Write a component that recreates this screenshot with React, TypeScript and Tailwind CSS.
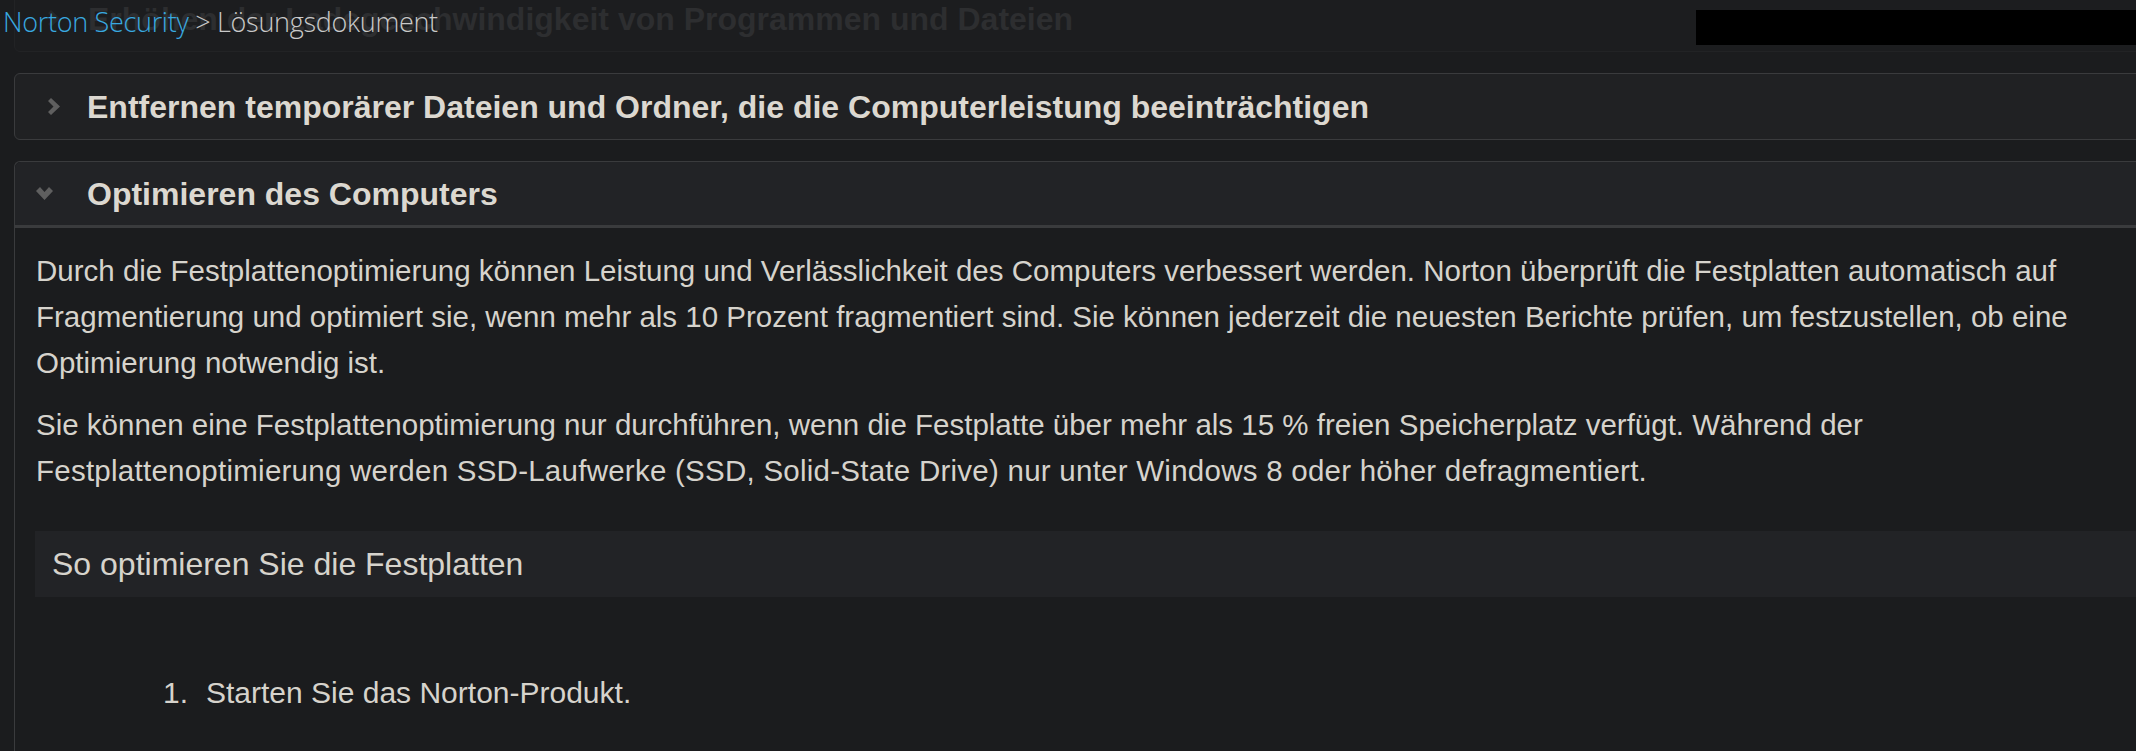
function ChevronRight({ className }: { className?: string }) {
  return (
    <svg viewBox="0 0 12 17" className={className}>
      <polygon points="0,3 3,0 12,8.5 3,17 0,14 5.5,8.5" fill="currentColor" />
    </svg>
  );
}

function ChevronDown({ className }: { className?: string }) {
  return (
    <svg viewBox="0 0 17 13" className={className}>
      <polygon points="0,4 4,0 8.5,5 13,0 17,4 8.5,13" fill="currentColor" />
    </svg>
  );
}

export default function App() {
  return (
    <div className="relative h-[751px] w-[2136px] overflow-hidden bg-[#1b1c1e] font-['Liberation_Sans',Arial,sans-serif]">
      {/* fixed breadcrumb bar over the scrolled content */}
      <div className="absolute left-0 top-0 z-10 h-[52px] w-full">
        <div className="pl-[3px] pt-[4px] font-['Open_Sans',sans-serif] text-[27px] font-light leading-[36px] tracking-[-0.3px]">
          <span className="text-[#39a9e0]">Norton Security</span>
          <span className="text-[#c9c9c9]"> &gt; Lösungsdokument</span>
        </div>
        <div className="absolute right-0 top-[10px] h-[35px] w-[440px] bg-black" />
      </div>

      <div className="-mt-[15px] flex w-[2300px] flex-col gap-[21px] pl-[14px]">
        {/* previous section, scrolled under the bar */}
        <div className="flex h-[67px] items-center rounded-[6px] border border-[#222325] bg-[#1c1d1f]">
          <ChevronRight className="ml-[33px] h-[17px] w-[12px] text-[#262729]" />
          <h2 className="ml-[28px] text-[32px] font-bold text-[#2d2e30]">
            Erhöhen der Ladegeschwindigkeit von Programmen und Dateien
          </h2>
        </div>

        <div className="flex h-[67px] items-center rounded-[6px] border border-[#3a3b3d] bg-[#202123]">
          <ChevronRight className="ml-[33px] h-[17px] w-[12px] text-[#5f5f5f]" />
          <h2 className="ml-[27px] text-[32px] font-bold text-[#dcd8d0]">
            Entfernen temporärer Dateien und Ordner, die die Computerleistung beeinträchtigen
          </h2>
        </div>

        <div className="rounded-t-[6px] border-l border-t border-[#3a3b3d]">
          <div className="flex h-[66px] items-center rounded-tl-[6px] border-b-[3px] border-[#3a3b3d] bg-[#222326]">
            <ChevronDown className="ml-[21px] h-[13px] w-[17px] text-[#5f5f5f]" />
            <h2 className="ml-[34px] text-[32px] font-bold text-[#dcd8d0]">Optimieren des Computers</h2>
          </div>
          <div className="pb-[120px] pl-[21px] pt-[20px] text-[29.5px] leading-[46px] text-[#d6d3cc]">
            <p>
              Durch die Festplattenoptimierung können Leistung und Verlässlichkeit des Computers verbessert werden. Norton überprüft die Festplatten automatisch auf
              <br />
              Fragmentierung und optimiert sie, wenn mehr als 10 Prozent fragmentiert sind. Sie können jederzeit die neuesten Berichte prüfen, um festzustellen, ob eine
              <br />
              Optimierung notwendig ist.
            </p>
            <p className="mt-[16px]">
              Sie können eine Festplattenoptimierung nur durchführen, wenn die Festplatte über mehr als 15 % freien Speicherplatz verfügt. Während der
              <br />
              <span className="tracking-[0.25px]">
                Festplattenoptimierung werden SSD-Laufwerke (SSD, Solid-State Drive) nur unter Windows 8 oder höher defragmentiert.
              </span>
            </p>
            <div className="ml-[-1px] mt-[37px] flex h-[66px] items-center bg-[#222326] pl-[17px] text-[32px]">
              So optimieren Sie die Festplatten
            </div>
            <ol className="mt-[73px] pl-[127px] text-[30px]">
              <li className="flex">
                <span className="w-[43px]">1.</span>
                <span>Starten Sie das Norton-Produkt.</span>
              </li>
            </ol>
          </div>
        </div>
      </div>
    </div>
  );
}
